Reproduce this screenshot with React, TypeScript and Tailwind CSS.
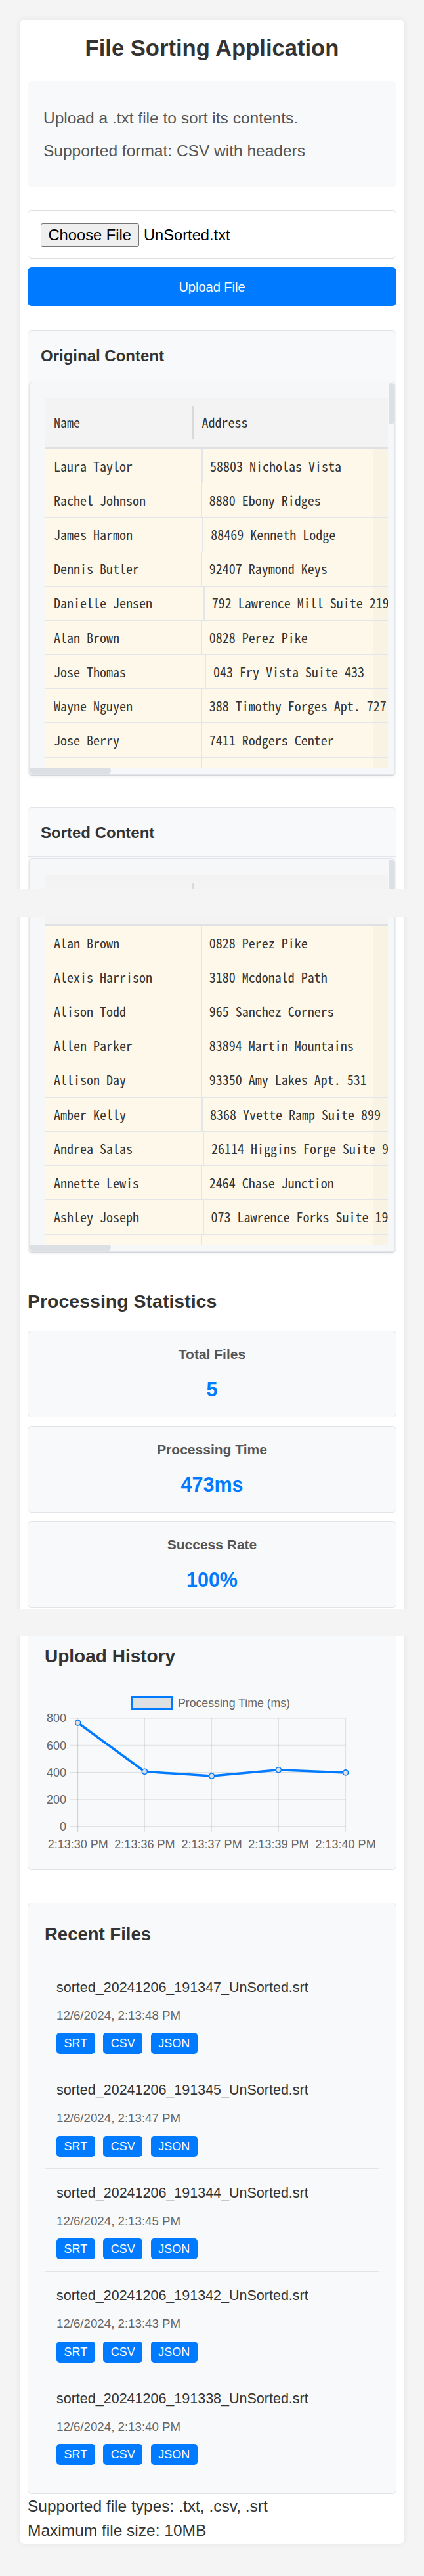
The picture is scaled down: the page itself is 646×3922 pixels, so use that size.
import React from "react";

type Row = { name: string; address: string; shift: number };

// the last entry of each list is the row cut by the scroll viewport; its text sits below the fold
const originalRows: Row[] = [
  { name: "Laura Taylor", address: "58803 Nicholas Vista", shift: 1.3 },
  { name: "Rachel Johnson", address: "8880 Ebony Ridges", shift: 0 },
  { name: "James Harmon", address: "88469 Kenneth Lodge", shift: 2.5 },
  { name: "Dennis Butler", address: "92407 Raymond Keys", shift: 0 },
  { name: "Danielle Jensen", address: "792 Lawrence Mill Suite 219", shift: 4.1 },
  { name: "Alan Brown", address: "0828 Perez Pike", shift: 0 },
  { name: "Jose Thomas", address: "043 Fry Vista Suite 433", shift: 6.2 },
  { name: "Wayne Nguyen", address: "388 Timothy Forges Apt. 727", shift: 0 },
  { name: "Jose Berry", address: "7411 Rodgers Center", shift: 0 },
  { name: "", address: "", shift: 0 },
];

const sortedRows: Row[] = [
  { name: "Alan Brown", address: "0828 Perez Pike", shift: 0 },
  { name: "Alexis Harrison", address: "3180 Mcdonald Path", shift: 0 },
  { name: "Alison Todd", address: "965 Sanchez Corners", shift: 0 },
  { name: "Allen Parker", address: "83894 Martin Mountains", shift: 0 },
  { name: "Allison Day", address: "93350 Amy Lakes Apt. 531", shift: 0 },
  { name: "Amber Kelly", address: "8368 Yvette Ramp Suite 899", shift: 1.3 },
  { name: "Andrea Salas", address: "26114 Higgins Forge Suite 958", shift: 3.3 },
  { name: "Annette Lewis", address: "2464 Chase Junction", shift: 0 },
  { name: "Ashley Joseph", address: "073 Lawrence Forks Suite 192", shift: 2.9 },
  { name: "", address: "", shift: 0 },
];

const files = [
  { name: "sorted_20241206_191347_UnSorted.srt", date: "12/6/2024, 2:13:48 PM" },
  { name: "sorted_20241206_191345_UnSorted.srt", date: "12/6/2024, 2:13:47 PM" },
  { name: "sorted_20241206_191344_UnSorted.srt", date: "12/6/2024, 2:13:45 PM" },
  { name: "sorted_20241206_191342_UnSorted.srt", date: "12/6/2024, 2:13:43 PM" },
  { name: "sorted_20241206_191338_UnSorted.srt", date: "12/6/2024, 2:13:40 PM" },
];

const stats = [
  { label: "Total Files", value: "5" },
  { label: "Processing Time", value: "473ms" },
  { label: "Success Rate", value: "100%" },
];

// name column ends at x=305.7 on the page, table starts at x=69
const BASE_NAME_W = 238.7;
const THIRD_COL_X = 499;

const DataTable = ({ rows }: { rows: Row[] }) => (
  <div className="mx-[1px] mt-[2px] overflow-hidden rounded-[6px] border border-[#e1e4e8] bg-[#f6f7f9] shadow-[0_2px_4px_rgba(0,0,0,0.08)]">
    <div className="flex">
      <div className="h-[587px] flex-1 overflow-hidden pl-[24px] pt-[24px]">
        <div className="w-[640px] font-['Noto_Sans_Mono_CJK_JP','DejaVu_Sans_Mono',monospace] text-[20px] leading-[26px] text-[#333]">
          {/* Header */}
          <div className="flex h-[78px] border-b-[3px] border-[#dfe2e5] bg-[#f3f3f3]">
            <div className="flex w-[224px] shrink-0 items-center pl-[13px]">Name</div>
            <div className="h-[51px] w-[1.5px] shrink-0 self-center bg-[#d9d9d9]" />
            <div className="flex items-center pl-[13px]">Address</div>
          </div>
          {/* Rows */}
          {rows.map((row, i) => {
            const nameW = BASE_NAME_W + row.shift;
            return (
              <div
                key={i}
                className="flex h-[52.2px] border-b-[1.5px] border-[#e3e6e9] bg-[#fdf8e9]"
              >
                <div
                  className="flex shrink-0 items-center border-r-2 border-[#e3e6e9] pl-[13px] whitespace-nowrap"
                  style={{ width: nameW }}
                >
                  {row.name}
                </div>
                <div
                  className="relative z-[1] flex shrink-0 items-center pl-[11px] whitespace-nowrap"
                  style={{ width: THIRD_COL_X - nameW }}
                >
                  {row.address}
                </div>
                <div className="w-[141px] shrink-0 bg-[#f9f3e4]" />
              </div>
            );
          })}
        </div>
      </div>
      {/* vertical scrollbar */}
      <div className="w-[10px] shrink-0 pt-[1px]">
        <div className="mx-auto h-[63px] w-[8px] rounded-full bg-[#dcdfe3]" />
      </div>
    </div>
    {/* horizontal scrollbar */}
    <div className="h-[10px]">
      <div className="h-[9px] w-[124px] rounded-full bg-[#dcdfe3]" />
    </div>
  </div>
);

const ContentPanel = ({ title, rows }: { title: string; rows: Row[] }) => (
  <div className="rounded-[6px] border border-[#e1e4e8] bg-[#f8f9fa]">
    <div className="border-b border-[#e1e4e8] pb-[21.3px] pl-[19px] pt-[22.7px]">
      <h3 className="text-[24px] font-bold leading-[30px] text-[#333]">{title}</h3>
    </div>
    <DataTable rows={rows} />
  </div>
);

const HistoryChart = () => {
  const xs = [50.7, 152.4, 254.6, 356.4, 458.6];
  const values = [766, 406, 373, 418, 398];
  const times = ["2:13:30 PM", "2:13:36 PM", "2:13:37 PM", "2:13:39 PM", "2:13:40 PM"];
  const ticks = [800, 600, 400, 200, 0];
  const yOf = (v: number) => 212 - (v / 800) * 165;
  const pts = xs.map((x, i) => `${x},${yOf(values[i])}`).join(" ");

  return (
    <svg
      width="509"
      height="252"
      viewBox="0 0 509 252"
      className="block font-['Liberation_Sans',Arial,sans-serif]"
    >
      {/* legend */}
      <rect x="133.5" y="14.5" width="61" height="18" fill="#dfe0e1" stroke="#007bff" strokeWidth="3" />
      <text x="203" y="30" fontSize="17.7" fill="#666">
        Processing Time (ms)
      </text>

      {/* horizontal grid */}
      {ticks.map((t) => (
        <g key={t}>
          <line
            x1="38"
            x2="458.6"
            y1={yOf(t)}
            y2={yOf(t)}
            stroke={t === 0 ? "rgba(0,0,0,0.18)" : "rgba(0,0,0,0.1)"}
            strokeWidth="1"
          />
          <text x="33" y={yOf(t) + 6.3} fontSize="18" fill="#666" textAnchor="end">
            {t}
          </text>
        </g>
      ))}

      {/* vertical grid */}
      {xs.map((x, i) => (
        <g key={x}>
          <line
            x1={x}
            x2={x}
            y1="47"
            y2="220"
            stroke={i === 0 ? "rgba(0,0,0,0.18)" : "rgba(0,0,0,0.1)"}
            strokeWidth="1"
          />
          <text x={x} y="245" fontSize="18" fill="#666" textAnchor="middle">
            {times[i]}
          </text>
        </g>
      ))}

      <polyline points={pts} fill="none" stroke="#007bff" strokeWidth="3.5" strokeLinejoin="round" />
      {xs.map((x, i) => (
        <circle key={x} cx={x} cy={yOf(values[i])} r="4" fill="#dfe0e1" stroke="#007bff" strokeWidth="1.6" />
      ))}
    </svg>
  );
};

const App = () => {
  return (
    <div className="relative min-h-screen bg-[#f4f4f4] pb-[46px] pt-[30px] font-['Liberation_Sans',Arial,sans-serif]">
      <div className="mx-[30px] rounded-[8px] bg-white px-[12px] pb-[2px] pt-[23px] shadow-[0_0_10px_rgba(0,0,0,0.07)]">
        <h1 className="text-center text-[34.6px] font-bold leading-[40px] text-[#333]">
          File Sorting Application
        </h1>

        {/* Instructions */}
        <div className="mt-[31px] flex flex-col gap-[20px] rounded-[6px] bg-[#f8f9fa] pb-[39px] pl-[24px] pt-[41px] text-[24.5px] leading-[30px] text-[#555]">
          <p>Upload a .txt file to sort its contents.</p>
          <p>Supported format: CSV with headers</p>
        </div>

        {/* File picker */}
        <div className="mt-[36px] flex items-center rounded-[6px] border-[1.5px] border-[#dedede] bg-white pb-[17.5px] pl-[18.5px] pt-[18.5px]">
          <span className="flex h-[36px] items-center rounded-[3px] border border-[#767676] bg-[#efefef] px-[11px] text-[23.7px] leading-[28px] text-black">
            Choose File
          </span>
          <span className="ml-[7px] text-[23.7px] leading-[28px] text-black">UnSorted.txt</span>
        </div>

        <button className="mt-[13px] flex h-[59px] w-full items-center justify-center rounded-[6px] bg-[#007bff] text-[20px] leading-[24px] text-white">
          Upload File
        </button>

        <div className="mt-[37px]">
          <ContentPanel title="Original Content" rows={originalRows} />
        </div>
        <div className="mt-[48px]">
          <ContentPanel title="Sorted Content" rows={sortedRows} />
        </div>

        {/* Stats */}
        <h2 className="mt-[57px] text-[28.5px] font-bold leading-[34px] text-[#333]">Processing Statistics</h2>
        <div className="mt-[28px] flex flex-col gap-[13px]">
          {stats.map((s) => (
            <div
              key={s.label}
              className="flex flex-col items-center rounded-[6px] border border-[#e1e4e8] bg-[#f8f9fa] pb-[24px] pt-[22px]"
            >
              <div className="text-[21px] font-bold leading-[25px] text-[#555]">{s.label}</div>
              <div className="mt-[23px] text-[30.5px] font-bold leading-[36px] text-[#007bff]">{s.value}</div>
            </div>
          ))}
        </div>

        {/* Upload History */}
        <div className="mt-[26px] rounded-[6px] border border-[#e1e4e8] bg-[#f8f9fa] px-[25px] pb-[25px] pt-[30px]">
          <h3 className="text-[28px] font-bold leading-[34px] text-[#333]">Upload History</h3>
          <div className="mt-[30px]">
            <HistoryChart />
          </div>
        </div>

        {/* Recent Files */}
        <div className="mt-[50px] rounded-[6px] border border-[#e1e4e8] bg-[#f8f9fa] px-[25px] pb-[25px] pt-[30px]">
          <h3 className="text-[27.5px] font-bold leading-[34px] text-[#333]">Recent Files</h3>
          <ul className="mt-[27.5px]">
            {files.map((f) => (
              <li
                key={f.name}
                className="border-b-[1.5px] border-[#e1e4e8] pb-[17.5px] pl-[18px] pt-[23.5px] last:border-b-0"
              >
                <div className="text-[21.5px] leading-[26px] text-[#333]">{f.name}</div>
                <div className="mt-[19px] text-[18.7px] leading-[22px] text-[#666]">{f.date}</div>
                <div className="mt-[15.5px] flex gap-[12.5px]">
                  {["SRT", "CSV", "JSON"].map((t) => (
                    <button
                      key={t}
                      className="flex h-[32px] items-center rounded-[5px] bg-[#007bff] px-[11.5px] text-[18px] leading-[22px] text-white"
                    >
                      {t}
                    </button>
                  ))}
                </div>
              </li>
            ))}
          </ul>
        </div>

        <div className="text-[24.5px] leading-[37px] text-[#333]">
          <p>Supported file types: .txt, .csv, .srt</p>
          <p>Maximum file size: 10MB</p>
        </div>
      </div>

      {/* capture seams in the long screenshot */}
      <div className="absolute left-0 right-0 top-[1354px] z-20 h-[42px] bg-[#f4f4f4]" />
      <div className="absolute left-0 right-0 top-[2449px] z-20 h-[42px] bg-[#f4f4f4]" />
    </div>
  );
};

export default App;
